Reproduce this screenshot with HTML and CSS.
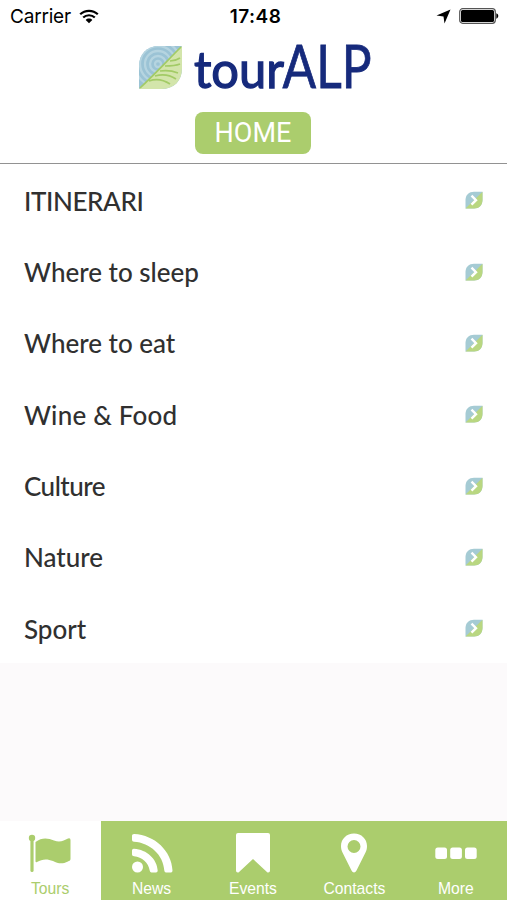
FILE: index.html
```html
<!DOCTYPE html>
<html lang="en">
<head>
    <meta charset="UTF-8">
    <meta name="viewport" content="width=device-width, initial-scale=1.0">
    <title>tourALP</title>
    <link rel="stylesheet" href="styles.css">
</head>
<body>
    <!-- Shared shapes -->
    <svg class="defs" width="0" height="0">
        <defs>
            <clipPath id="leaf-clip">
                <path d="M0 43V20C0 8 8 0 20 0H43V22C43 35 35 43 22 43Z"/>
            </clipPath>
            <symbol id="leaf" viewBox="0 0 43 43">
                <g clip-path="url(#leaf-clip)">
                    <rect width="43" height="43" fill="#9bc3d5"/>
                    <g fill="none" stroke="#b5d4e0" stroke-width="2.3">
                        <circle cx="19" cy="18" r="3"/>
                        <circle cx="19" cy="18" r="8"/>
                        <circle cx="19" cy="18" r="13"/>
                        <circle cx="19" cy="18" r="18"/>
                        <circle cx="19" cy="18" r="23"/>
                    </g>
                    <path d="M0 43L43 0V43Z" fill="#d3e5ab"/>
                    <path d="M1 42C16 28 27 16 42 1M31 15C34 15 38 14 41 12M26 20C31 20 36 20 41 18M21 25C28 24 34 25 39 27M16 30C23 28 31 29 37 33M10 35C18 32 25 34 31 38" fill="none" stroke="#a3cb66" stroke-width="1.7"/>
                </g>
            </symbol>
            <symbol id="arrow-leaf" viewBox="0 0 18 18">
                <path d="M.5 17.500V9C.5 4 4 .8 9 .8H17.500V9C17.500 14 14 17.500 9 17.500Z" fill="#a5cbd4"/>
                <path d="M.5 17.500L17.500 .8V9C17.500 14 14 17.500 9 17.500Z" fill="#b9d781"/>
                <path d="M6.500 4.700L11 9.200L6.500 13.700" fill="none" stroke="#fff" stroke-width="2.400"/>
            </symbol>
        </defs>
    </svg>

    <header class="header">
        <div class="status-bar">
            <div class="carrier">
                <span>Carrier</span>
                <svg width="20" height="15" viewBox="0 0 20 15">
                    <path d="M1.2 5.3C6 .6 14 .6 18.800 5.300M4.200 8.500C7.300 5.500 12.700 5.500 15.800 8.500" fill="none" stroke="#000" stroke-width="2.200"/>
                    <path d="M6.700 11C8.400 9.100 11.600 9.100 13.300 11L10 14.300Z"/>
                </svg>
            </div>
            <span class="clock">17:48</span>
            <div class="indicators">
                <svg width="15" height="15" viewBox="0 0 15 15"><path d="M14.500 .5L8.500 14.500L7.500 7.500L.5 6.500Z"/></svg>
                <svg width="40" height="16" viewBox="0 0 40 16">
                    <rect x=".7" y=".7" width="35.600" height="14.600" rx="3" fill="#fff" stroke="#555" stroke-width="1.200"/>
                    <rect x="2" y="2" width="33" height="12" rx="1.500"/>
                    <path d="M37.300 5.300C39.900 6 39.900 10 37.300 10.700Z"/>
                </svg>
            </div>
        </div>
        <div class="logo">
            <svg width="43" height="43"><use href="#leaf"/></svg>
            <svg class="logo-name" width="180" height="54" viewBox="0 0 180 54">
                <text class="logo-tour" x="-1" y="47.500" textLength="90" lengthAdjust="spacingAndGlyphs">tour</text>
                <text class="logo-alp" x="87.500" y="47.500" textLength="89" lengthAdjust="spacingAndGlyphs">ALP</text>
            </svg>
        </div>
        <h1 class="page-title">HOME</h1>
    </header>

    <ul class="menu">
        <li><span class="caps">ITINERARI</span><svg width="18" height="18"><use href="#arrow-leaf"/></svg></li>
        <li><span>Where to sleep</span><svg width="18" height="18"><use href="#arrow-leaf"/></svg></li>
        <li><span>Where to eat</span><svg width="18" height="18"><use href="#arrow-leaf"/></svg></li>
        <li><span class="wine">Wine &amp; Food</span><svg width="18" height="18"><use href="#arrow-leaf"/></svg></li>
        <li><span class="culture">Culture</span><svg width="18" height="18"><use href="#arrow-leaf"/></svg></li>
        <li><span>Nature</span><svg width="18" height="18"><use href="#arrow-leaf"/></svg></li>
        <li><span>Sport</span><svg width="18" height="18"><use href="#arrow-leaf"/></svg></li>
    </ul>

    <nav class="tabs">
        <a class="tab active">
            <svg width="44" height="44" viewBox="0 0 44 44">
                <circle cx="4" cy="7" r="3.200"/>
                <rect x="2.400" y="7" width="3.200" height="34" rx="1.600"/>
                <path d="M7.500 11C14 6 20 7 26 9.500C32 12 36 9.500 40 7.500Q42.500 6.500 42.500 9V28C42.500 29.500 41 30 40 30.500C34 33.500 30 32.500 25 30C19 27.500 14 28 9 31Q7.500 32 7.500 30Z"/>
            </svg>
            <span>Tours</span>
        </a>
        <a class="tab">
            <svg width="44" height="44" viewBox="0 0 44 44">
                <circle cx="7.500" cy="36" r="5.500"/>
                <path d="M2 4.500Q2 3 4 3C25 4 41.500 20 42.500 39.500Q42.500 41.500 41 41.500H36Q34.500 41.500 34.300 39.500C33.500 24 20 11.500 4 10.700Q2 10.500 2 9ZM2 19.500Q2 17.500 4 17.700C17 18.500 27 28 27.700 39.500Q27.700 41.500 26 41.500H21.500Q20 41.500 19.700 39.500C18.500 31.500 12 26 4 25.200Q2 25 2 23.500Z"/>
            </svg>
            <span>News</span>
        </a>
        <a class="tab">
            <svg width="44" height="44" viewBox="0 0 44 44">
                <path d="M5 4Q5 2 7 2H37Q39 2 39 4V39.500Q39 42 36.500 41.500L22 28L7.500 41.500Q5 42 5 39.500Z"/>
            </svg>
            <span>Events</span>
        </a>
        <a class="tab">
            <svg width="44" height="44" viewBox="0 0 44 44">
                <path fill-rule="evenodd" d="M22 2.500C14.500 2.500 9 8 9 15C9 17.500 9.500 19.500 10.500 21.500L19.500 39.500Q20.500 41.500 22 41.500T24.500 39.500L33.500 21.500C34.500 19.500 35 17.500 35 15C35 8 29.500 2.500 22 2.500ZM22 9A6.500 6.500 0 1 1 22 22A6.500 6.500 0 1 1 22 9Z"/>
            </svg>
            <span>Contacts</span>
        </a>
        <a class="tab">
            <svg width="44" height="44" viewBox="0 0 44 44">
                <rect x="1.300" y="16.500" width="11.700" height="11.500" rx="2.500"/>
                <rect x="16.200" y="16.500" width="11.700" height="11.500" rx="2.500"/>
                <rect x="31" y="16.500" width="11.700" height="11.500" rx="2.500"/>
            </svg>
            <span>More</span>
        </a>
    </nav>
</body>
</html>
```
FILE: styles.css
```css
* {
    margin: 0;
    padding: 0;
    box-sizing: border-box;
}

body {
    height: 900px;
    display: flex;
    flex-direction: column;
    overflow: hidden;
    font-family: Lato, sans-serif;
    background-color: #fcfafb;
}

svg {
    display: block;
    flex: none;
}

.defs {
    position: absolute;
}

/* Header */
.header {
    height: 164px;
    background-color: #fff;
    border-bottom: 1px solid #929292;
}

.status-bar {
    display: grid;
    grid-template-columns: 1fr auto 1fr;
    align-items: center;
    height: 32px;
    padding: 0 8px 0 10px;
    font-family: Inter, sans-serif;
    font-size: 19px;
    color: #000;
}

.carrier {
    display: flex;
    align-items: center;
    gap: 8px;
}

.carrier span {
    letter-spacing: -0.2px;
}

.clock {
    padding-left: 2px;
    font-weight: 600;
    letter-spacing: 0.5px;
}

.indicators {
    display: flex;
    justify-content: flex-end;
    align-items: center;
    gap: 8px;
}

.logo {
    display: flex;
    align-items: center;
    gap: 13px;
    height: 70px;
    padding-left: 139px;
}

.logo-name {
    fill: #162a7c;
    stroke: #162a7c;
    overflow: visible;
}

.logo-tour {
    font-size: 51px;
    stroke-width: 1.3px;
}

.logo-alp {
    font-size: 60px;
    stroke-width: 0.8px;
}

.page-title {
    width: 116px;
    height: 42px;
    margin: 10px auto 0 195px;
    border-radius: 8px;
    background-color: #abcd6d;
    color: #fff;
    font-family: Roboto, sans-serif;
    font-size: 27px;
    font-weight: 400;
    line-height: 42px;
    text-align: center;
}

/* Menu */
.menu {
    list-style: none;
    background-color: #fff;
}

.menu li {
    display: flex;
    justify-content: space-between;
    align-items: center;
    height: 71.35px;
    padding: 1px 24px 0;
    color: #303030;
    font-size: 26px;
    font-weight: 500;
}

.menu span {
    padding-top: 1px;
}

.menu .caps {
    letter-spacing: -0.4px;
}

.menu .wine {
    letter-spacing: 0.2px;
}

.menu .culture {
    letter-spacing: -0.5px;
}

/* Bottom tabs */
.tabs {
    display: grid;
    grid-template-columns: repeat(5, 1fr);
    height: 79px;
    margin-top: auto;
    background-color: #abcd6d;
}

.tab {
    display: flex;
    flex-direction: column;
    align-items: center;
    padding: 10px 1px 0 0;
    color: #fff;
    fill: #fff;
    font-family: "Liberation Sans", Arial, sans-serif;
    font-size: 15.7px;
    line-height: 18px;
}

.tab span {
    margin-top: 5px;
}

.tab.active {
    background-color: #fff;
    color: #abcd6d;
    fill: #abcd6d;
}
```
